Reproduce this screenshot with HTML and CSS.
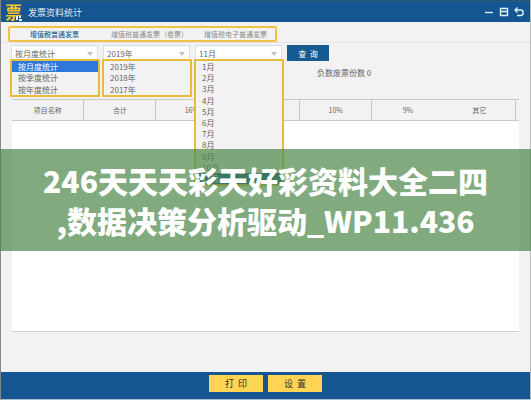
FILE: index.html
```html
<!DOCTYPE html>
<html lang="zh-CN">
<head>
  <meta charset="UTF-8">
  <meta name="viewport" content="width=device-width, initial-scale=1.0">
  <title>发票资料统计</title>
  <link rel="stylesheet" href="styles.css">
</head>
<body>
  <div class="window">
    <header class="titlebar">
      <span class="logo">票
        <svg class="logo-mark" viewBox="0 0 6 5" width="6" height="5"><path d="M0 0h2v4H0zM3 0h2v2H3zM3 3h3v2H3z" fill="#e8eef0"/></svg>
      </span>
      <h1>发票资料统计</h1>
      <div class="window-btns">
        <button type="button" aria-label="最小化"><svg viewBox="0 0 10 10" width="10" height="10"><path d="M1 5.500h8"/></svg></button>
        <button type="button" aria-label="最大化"><svg viewBox="0 0 10 10" width="10" height="10"><path d="M1.500 1.500h7v7h-7zM1.500 4.500h7M1 1.500h8"/></svg></button>
        <button type="button" aria-label="返回"><svg viewBox="0 0 10 10" width="10" height="10"><path d="M3.500 .5L1 3l2.500 2.500M1 3h5.500a2.700 2.700 0 0 1 0 5.500H3"/></svg></button>
      </div>
    </header>

    <nav class="tabs">
      <div class="tab-box">
        <a href="#" class="active">增值税普通发票</a>
        <a href="#">增值税普通发票（卷票）</a>
        <a href="#">增值税电子普通发票</a>
      </div>
    </nav>

    <form class="filters">
      <div class="field">
        <select aria-label="统计方式"><option>按月度统计</option><option>按季度统计</option><option>按年度统计</option></select>
        <ul class="options">
          <li class="selected">按月度统计</li>
          <li>按季度统计</li>
          <li>按年度统计</li>
        </ul>
      </div>
      <div class="field">
        <select aria-label="年份"><option>2019年</option><option>2018年</option><option>2017年</option></select>
        <ul class="options">
          <li>2019年</li>
          <li>2018年</li>
          <li>2017年</li>
        </ul>
      </div>
      <div class="field">
        <select aria-label="月份"><option>11月</option></select>
        <ul class="options months">
          <li>1月</li>
          <li>2月</li>
          <li>3月</li>
          <li>4月</li>
          <li>5月</li>
          <li>6月</li>
          <li>7月</li>
          <li>8月</li>
          <li>9月</li>
          <li>10月</li>
          <li class="selected">11月</li>
        </ul>
      </div>
      <button type="button" class="query-btn">查&nbsp; 询</button>
    </form>
    <p class="summary">负数废票份数 0</p>

    <main class="content">
      <div class="table-head">
        <table>
          <thead>
            <tr><th>项目名称</th><th>合计</th><th>16%</th><th>13%</th><th>10%</th><th class="open">9%</th><th>其它</th></tr>
          </thead>
        </table>
      </div>
    </main>

    <footer class="actions">
      <button type="button">打&nbsp; 印</button>
      <button type="button">设&nbsp; 置</button>
    </footer>
  </div>

  <div class="banner">
    <p>246天天天彩天好彩资料大全二四<br>,数据决策分析驱动_WP11.436</p>
  </div>
</body>
</html>
```

FILE: styles.css
```css
* {
  box-sizing: border-box;
}

body {
  margin: 0;
  font-family: "Noto Sans CJK SC", "Noto Sans", sans-serif;
  font-size: 8px;
  color: #666;
  background: #f2f2f2;
}

button,
select {
  font-family: inherit;
  border: none;
  border-radius: 0;
}

.window {
  display: flex;
  flex-direction: column;
  min-height: 100vh;
  border-left: 1px solid #858585;
  border-right: 1px solid #b9b9b9;
  border-bottom: 1px solid #a9bfd3;
}

/* title bar */
.titlebar {
  display: flex;
  align-items: center;
  height: 22px;
  padding: 0 6px 0 4px;
  background: #155592;
  border-top: 2px solid #24597c;
}

.logo {
  position: relative;
  width: 17px;
  margin-right: 6px;
  font-size: 17px;
  font-weight: 700;
  line-height: 18px;
  color: #f5c52c;
}

.logo-mark {
  position: absolute;
  right: 0;
  bottom: 0;
  background: #155592;
}

.titlebar h1 {
  margin: 0;
  font-size: 9px;
  font-weight: 400;
  color: #e3edf5;
}

.window-btns {
  display: flex;
  gap: 5px;
  margin-left: auto;
}

.window-btns button {
  display: flex;
  padding: 0;
  background: none;
}

.window-btns path {
  fill: none;
  stroke: #d9f1f7;
  stroke-width: 1.4;
}

/* invoice type tabs */
.tabs {
  padding: 4px 7px 0;
  border-bottom: 1px solid #e5e5e5;
}

.tab-box {
  display: flex;
  align-items: center;
  gap: 32px;
  width: 269px;
  height: 16px;
  padding-left: 20px;
  border: 2px solid #efc243;
  border-radius: 2px;
}

.tab-box a {
  font-size: 7px;
  color: #8d8d8d;
  text-decoration: none;
  white-space: nowrap;
}

.tab-box a + a + a {
  margin-left: -16px;
}

.tab-box .active {
  color: #22658d;
  font-weight: 500;
}

/* filters */
.filters {
  display: flex;
  gap: 5px;
  padding: 2px 11px 0 10px;
}

.field {
  position: relative;
  width: 87px;
}

.field::after {
  content: "";
  position: absolute;
  top: 7px;
  right: 5px;
  border: 3px solid transparent;
  border-top: 4px solid #c4c4c4;
  border-bottom: none;
}

.field select {
  display: block;
  width: 100%;
  height: 16px;
  padding: 0 3px;
  appearance: none;
  background: #fff;
  border: 1px solid #dedede;
  font-size: 8px;
  color: #666;
}

.options {
  position: absolute;
  z-index: 1;
  top: 14px;
  left: -1px;
  right: -2px;
  height: 38px;
  display: flex;
  flex-direction: column;
  margin: 0;
  padding: 0;
  list-style: none;
  background: #f2f2f2;
  border: 2px solid #e8bb3d;
  border-radius: 1px;
}

.options li {
  flex: 1;
  display: flex;
  align-items: center;
  min-height: 0;
  padding-left: 6px;
  line-height: 11px;
}

.options .selected {
  background: #2e78dc;
  color: #fff;
}

.months {
  height: 127px;
}

.months .selected {
  background: #155592;
}

.query-btn {
  width: 42px;
  height: 16px;
  padding: 0;
  background: #155b91;
  color: #fff;
  font-size: 8px;
}

.summary {
  margin: 6px 0 0 316px;
  line-height: 12px;
}

/* result table */
.content {
  flex: 1;
  margin: 20px 11px 40px;
  background: #fff;
  border-bottom: 1px solid #d0d0d0;
}

.table-head {
  padding-right: 3px;
  background: #f2f2f2;
  border-top: 1px solid #c8c8c8;
  border-bottom: 1px solid #c8c8c8;
}

.content table {
  width: 100%;
  table-layout: fixed;
  border-collapse: collapse;
}

.content th {
  height: 20px;
  padding: 0;
  border-right: 1px solid #c8c8c8;
  font-size: 7px;
  font-weight: 400;
}

.content .open {
  border-right: none;
}

/* bottom buttons */
.actions {
  display: flex;
  justify-content: center;
  gap: 5px;
  height: 27px;
  padding-top: 3px;
  background: #155592;
}

.actions button {
  width: 54px;
  height: 17px;
  padding: 0;
  background: #ffd452;
  color: #333;
  font-size: 9px;
}

/* headline laid over the window */
.banner {
  position: absolute;
  z-index: 2;
  top: 149px;
  left: 0;
  right: 0;
  padding: 11px 0;
  background: rgba(76, 135, 73, 0.7);
}

.banner p {
  margin: 0;
  font-size: 30px;
  font-weight: 900;
  line-height: 40px;
  text-align: center;
  color: #fff;
}
```
